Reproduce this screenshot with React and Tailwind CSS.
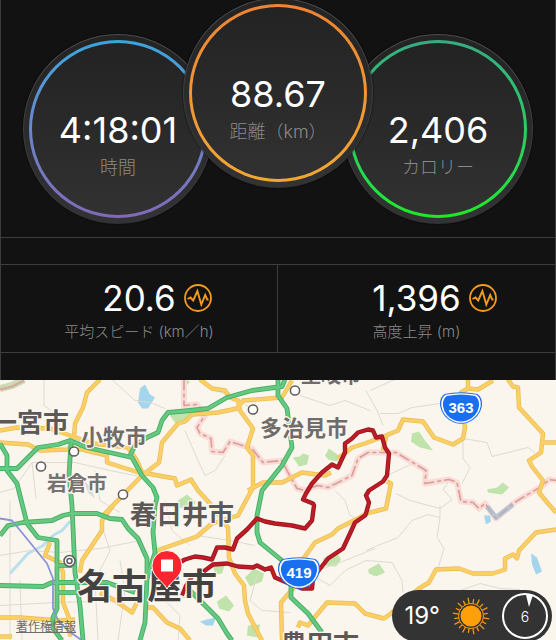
import React from 'react';

const ringTones = {
  time: 'from-[#37a5dc] to-[#8069b8]',
  distance: 'from-[#ee8434] to-[#f3a733]',
  calories: 'from-[#36ad80] to-[#1ceb1f]',
};

function Dial({ value, label, tone, className }) {
  return (
    <div className={`size-[190px] shrink-0 rounded-full bg-linear-to-b from-[#4b4b4d] to-[#303032] p-px shadow-[0_0_2px_#000] ${className}`}>
      <div className="size-full rounded-full bg-linear-to-b from-[#232324] to-[#333335] p-[5px]">
        <div className={`size-full rounded-full bg-linear-to-b p-[3px] ${ringTones[tone]}`}>
          <div className="flex size-full flex-col items-center rounded-full bg-linear-to-b from-[#232323] to-[#313131] pt-[65px]">
            <span className="text-[36px] leading-[44px] text-white">{value}</span>
            <span className="mt-1 text-[18px] leading-6 font-light text-[#8a8a8a]">{label}</span>
          </div>
        </div>
      </div>
    </div>
  );
}

function PulseIcon() {
  return (
    <svg viewBox="0 0 28 28" className="size-7" fill="none" stroke="#f39a1e" aria-hidden="true">
      <circle cx="14" cy="14" r="13" strokeWidth="1.800" />
      <path d="M3.500 15 6.500 13.500 9.200 16.500 13.400 7 17.300 20.500 21.200 11 23.200 15.500 24.500 15.500" strokeWidth="1.900" />
    </svg>
  );
}

function Stat({ value, label }) {
  return (
    <div className="flex flex-col items-center pt-[11px]">
      <div className="grid w-full grid-cols-[1fr_auto_1fr] items-center gap-2">
        <span className="col-start-2 text-[35px] leading-[44px] text-white">{value}</span>
        <PulseIcon />
      </div>
      <span className="text-[15px] leading-6 font-light text-[#8a8a8a]">{label}</span>
    </div>
  );
}

const minorRoads = [
  'M44 379V405L62 418 58 428',
  'M112 379 135 400 150 402 165 408',
  'M0 492 14 488 32 462 75 462 110 470 140 476',
  'M32 462 36 498',
  'M95 470 100 500 120 512',
  'M10 500V640',
  'M0 555 30 550 60 552 100 548 140 540',
  'M0 605 55 602 140 600 200 596',
  'M20 580 22 640',
  'M100 520 110 550 95 580 98 640',
  'M120 560 125 590 118 640',
  'M165 500 172 530 190 545',
  'M185 430 198 460 205 475 215 470 225 455',
  'M212 388 235 398 258 412',
  'M366 390 378 412 383 425',
  'M380 413 398 413 412 407 440 403 452 393',
  'M370 390 388 382 395 379',
  'M463 438 487 442 492 456 528 447 535 452',
  'M463 440 463 458 470 467 462 483',
  'M387 475 415 462',
  'M396 493 410 500 440 508 452 499 443 489 448 482',
  'M366 550 378 545 398 537 412 520 428 514 440 517 440 505',
  'M440 517 437 537 444 548 438 568',
  'M366 560 392 562 402 580 403 592',
  'M335 490 345 500 350 515 360 520',
  'M197 535 230 540 255 545',
  'M257 575 250 600 262 610 290 612',
  'M312 590 318 570 345 560 375 548',
  'M300 395 330 405 345 400 370 410',
  'M318 578 330 585 345 570 366 560',
  'M165 600 180 615 178 640',
  'M460 590 480 583 500 588 520 589',
];

const yellowRoads = [
  'M100 379 87 392 83 407 75 423 74 438',
  'M0 430 17 427 50 428 70 435 93 443 128 447 137 460 142 472 158 475 175 478 177 485 191 479 198 490 210 503 228 527 229 557 235 573 244 585 245 600 248 613 262 640',
  'M0 442 28 444 40 450 68 449 73 443',
  'M78 448 107 455 107 462 142 473',
  'M113 505 102 520 102 530 82 560 80 572',
  'M292 380 282 397 243 400 237 408 218 412 192 414 185 421 178 423 162 442 159 462 142 475 103 515',
  'M200 379 212 388 225 390 230 397 238 400 240 410 253 428 247 447 253 455 253 487 238 515 212 523 197 536 157 550 147 572',
  'M248 490 263 482 282 482 302 472 325 475 331 472',
  'M338 458 352 447 365 443 386 435 398 430 403 419 423 421 434 437 453 444 463 438 465 427 461 392 468 388V379',
  'M468 388 478 389 493 380',
  'M508 379 513 386 518 387 519 407 543 433 541 452 529 460 532 466 543 480 539 492 548 503 556 512',
  'M543 442H556',
  'M386 436 383 450',
  'M387 481 391 483 386 508 366 513 358 518 338 528 332 534 315 542 302 560 293 588 281 602 282 640',
  'M298 627 300 622 308 625 327 602 355 603 365 613 384 618 391 613 419 588 429 582 436 569 459 568 473 573 493 573 505 569V558L513 554 517 558 519 550 536 532 556 529',
  'M50 542 45 555 60 562 63 572V602L70 620V636',
  'M0 617H20L60 620 75 619',
  'M100 592 115 600 132 612 137 602',
  'M147 607H153L167 622 180 628 190 640',
  'M0 636H12',
];

const greenRoads = [
  'M130 455 135 445 147 437 158 432 162 420 168 412 190 410 208 408 227 397 252 390 267 388 282 386 285 379',
  'M278 379V395L287 408 292 447 282 465 262 490 257 515V532L260 542 282 560 291 585V597L308 613 322 632',
  'M0 468H17L38 447 58 444 70 440 87 447 132 457 142 475 153 487 157 497 155 505 153 532 155 552 147 578 145 622 140 640',
  'M0 443 7 455V470L17 483 25 515 27 523 38 537 57 540V608L53 617V628L62 640',
  'M71 442 69 475 72 505 75 572 80 605 83 640',
  'M0 535 8 525 23 522 52 520 63 515 72 513H97L110 518 122 519 128 528 138 538 147 558V578',
  'M0 585 43 586 52 582H107L135 592',
  'M58 592H77',
  'M55 565H72',
  'M185 585 205 605 218 618 227 633 232 640',
];

const prefectureBorder =
  'M184 379V405L197 404 205 415 197 427 200 433 211 438 212 451 223 452 230 441 252 448 263 462 282 460 288 472 297 488 305 490 317 485 328 487 352 475 358 458 368 452H396L426 470 425 483 449 479 457 482 461 501 473 502 479 508 485 503 496 518 513 503 521 498 543 485 549 479 556 480';

const forests = [
  'M168 412 176 424 190 419V412Z',
  'M293 457 300 456 303 453 309 455 307 464 299 466Z',
  'M325 455 329 448 336 453 341 457 337 461 328 459Z',
  'M412 433 419 431 425 440 433 450 420 447 411 441Z',
  'M487 489 497 487 503 482 509 487 502 494 488 492Z',
  'M245 577 254 568 264 573 262 581 250 586Z',
  'M217 601 226 595 234 605 229 611 219 608Z',
  'M248 625 260 624 258 637 247 635Z',
  'M323 558 337 552 341 559 336 566 325 565Z',
  'M368 569 379 563 385 572 376 576 369 573Z',
  'M213 566 225 564 222 573 215 574Z',
  'M178 500 187 494 196 502 190 508 178 507Z',
  'M185 379 190 381 186 386Z',
];

const lakes = [
  'M140 388 145 384 150 394 155 397 148 408 142 408 138 402Z',
  'M200 621 207 619 216 617 213 625 206 625Z',
  'M531 553 537 557 542 571 536 574 532 564Z',
  'M484 515 490 515 491 521 486 524Z',
];

const route =
  'M172 566 185 559 195 556 203 557 212 559 217 547 225 547 233 549 237 538 247 529 257 518 265 521 275 523 292 525 305 528 312 520 314 505 313 503 303 499 306 493 312 483 322 472 332 464 338 467 345 452 345 443 352 438 358 432 368 429 373 430 376 437 382 436 385 447 389 453 387 475 383 481 369 490 366 495 369 502 366 513 365 515 355 522 350 533 343 548 328 558 321 567 313 577 312 588 302 588 289 583 275 577 271 567 265 569 257 565 253 567 238 566 227 563 213 564 205 570';

const places = [
  { name: '一宮市', x: -9, y: 431, className: 'fill-[#5b5856] text-[26px]' },
  { name: '小牧市', x: 81, y: 444, className: 'fill-[#6f6c6a] text-[22px]' },
  { name: '岩倉市', x: 47, y: 490, className: 'fill-[#757270] text-[20px]' },
  { name: '多治見市', x: 260, y: 435, className: 'fill-[#6f6c6a] text-[22px]' },
  { name: '土岐市', x: 301, y: 382, className: 'fill-[#6f6c6a] text-[20px]' },
  { name: '春日井市', x: 130, y: 523, className: 'fill-[#5b5856] text-[26px]' },
  { name: '名古屋市', x: 77, y: 598, className: 'fill-[#444240] text-[35px]' },
  { name: '豊田市', x: 281, y: 653, className: 'fill-[#5b5856] text-[26px]' },
];

const towns = [
  [74, 451],
  [41, 466],
  [123, 494],
  [253, 409],
  [295, 390],
];

function RouteShield({ number, x, y }) {
  const outline = 'M-16.500-14.500Q0-18 16.500-14.500 21.500-11 21-3 19 9 7 14 0 16.500-7 14-19 9-21-3-21.500-11-16.500-14.500Z';
  return (
    <g transform={`translate(${x} ${y})`}>
      <path d={outline} fill="#1d6fe8" />
      <path d={outline} transform="scale(.94)" fill="#fff" />
      <path d={outline} transform="scale(.86)" fill="#1870f0" />
      <text y="4" textAnchor="middle" className="fill-white font-['Liberation_Sans'] text-[15px] font-bold">{number}</text>
    </g>
  );
}

function RouteMap() {
  return (
    <svg viewBox="0 379 556 261" preserveAspectRatio="xMidYMid slice" className="absolute inset-0 size-full" fill="none" strokeLinejoin="round" role="img" aria-label="ルートマップ">
      <g fill="#bfe3ab">{forests.map((d) => <path key={d} d={d} />)}</g>
      <g fill="#a3d5ec">{lakes.map((d) => <path key={d} d={d} />)}</g>
      <path d="M84 480 90 486 95 498 88 492Z" fill="#d5dae2" />
      <path d="M0 388 12 385 24 379" stroke="#cfd9b4" strokeWidth="7" />
      <path d="M0 389 12 386 24 380" stroke="#d3a9a0" strokeWidth="2" />
      <path d="M70 521 62 530 53 535 43 545 28 553 10 573" stroke="#b9e0ee" strokeWidth="3" />
      <g stroke="#dedad4" strokeWidth="1">{minorRoads.map((d) => <path key={d} d={d} />)}</g>
      <path d={prefectureBorder} stroke="#fadcd6" strokeWidth="6" />
      <path d={prefectureBorder} stroke="#d99c98" strokeWidth="1.600" strokeDasharray="11 3 4 3" />
      <path d="M487 506 496 517 513 504" stroke="#9fb9cc" strokeWidth="5" opacity=".7" />
      <g stroke="#ebbb50" strokeWidth="4.400">{yellowRoads.map((d) => <path key={d} d={d} />)}</g>
      <g stroke="#fad066" strokeWidth="3">{yellowRoads.map((d) => <path key={d} d={d} />)}</g>
      <g stroke="#48b067" strokeWidth="4.800">{greenRoads.map((d) => <path key={d} d={d} />)}</g>
      <g stroke="#66c982" strokeWidth="2.800">{greenRoads.map((d) => <path key={d} d={d} />)}</g>
      <path d="M0 518 12 520 30 542 47 563 53 578V608L58 620 68 630 82 640" stroke="#8c93d6" strokeWidth="1.800" />
      <path d="M205 570 193 575 186 585 182 595" stroke="#b01a24" strokeWidth="4" />

      <g className="font-['Noto_Sans_CJK_JP',sans-serif] font-bold" stroke="#fbf7f0" strokeWidth="2.500" paintOrder="stroke">
        {places.map((place) => (
          <text key={place.name} x={place.x} y={place.y} className={place.className}>{place.name}</text>
        ))}
      </g>

      <g fill="#fff" stroke="#5f5c5a" strokeWidth="1.500">
        {towns.map(([x, y]) => <circle key={`${x}-${y}`} cx={x} cy={y} r="4.600" />)}
        <circle cx="69.500" cy="560.500" r="5.500" />
        <circle cx="69.500" cy="560.500" r="2.500" />
      </g>

      <path d={route} stroke="#9c1520" strokeWidth="4.400" strokeLinecap="round" />
      <path d={route} stroke="#bb1c26" strokeWidth="2.800" strokeLinecap="round" />

      <RouteShield number="363" x={461} y={408} />
      <RouteShield number="419" x={299} y={573} />

      <path d="M167 588.500C163 580 152 577 152 565A15 15 0 0 1 182 565C182 577 171 580 167 588.500Z" fill="#fb2530" stroke="#fff" strokeWidth="1" />
      <rect x="161" y="559" width="12" height="12" fill="#fff" />
    </svg>
  );
}

function SunIcon() {
  const rays = Array.from({ length: 20 }, (_, i) => i * 18);
  return (
    <svg viewBox="0 0 38 38" className="size-[38px]" aria-hidden="true">
      <circle cx="19" cy="19" r="10.500" fill="#ff9f0a" />
      <circle cx="19" cy="19" r="12.500" fill="none" stroke="#ff9f0a" strokeWidth="1" />
      {rays.map((angle, i) => (
        <path key={angle} d={i % 2 ? 'M19 6.500V.5' : 'M19 6.500V2'} stroke="#f0981a" strokeWidth="1.300" transform={`rotate(${angle + 9} 19 19)`} />
      ))}
    </svg>
  );
}

function WeatherPill() {
  return (
    <div className="absolute right-1 -bottom-0.5 flex h-[52px] items-center rounded-full bg-[#333333] pr-1 pl-3 text-white">
      <span className="text-[24px] leading-8">19°</span>
      <span className="ml-3">
        <SunIcon />
      </span>
      <span className="relative ml-3 flex size-[46px] items-center justify-center rounded-full border-2 border-white text-[14px] font-light">
        <svg viewBox="0 0 8 12" className="absolute top-0 left-[22px] h-3 w-2" fill="#fff" aria-hidden="true">
          <path d="M0 0H7L3 12Z" />
        </svg>
        6
      </span>
    </div>
  );
}

export default function App() {
  return (
    <div className="flex min-h-screen flex-col overflow-hidden bg-[#121212] font-[Inter,'Noto_Sans_CJK_JP',sans-serif]">
      <section className="flex h-[237px] items-start justify-center overflow-hidden border-x border-[#3c3c3c]">
        <Dial value="4:18:01" label="時間" tone="time" className="mt-[34px]" />
        <Dial value="88.67" label="距離（km）" tone="distance" className="relative -mx-[30px] -mt-0.5" />
        <Dial value="2,406" label="カロリー" tone="calories" className="mt-[34px]" />
      </section>

      <section className="border-x border-t border-[#3c3c3c] pt-[26px] pb-[27px]">
        <div className="grid h-[89px] grid-cols-2 divide-x divide-[#3c3c3c] border-y border-[#3c3c3c]">
          <Stat value="20.6" label="平均スピード (km／h)" />
          <Stat value="1,396" label="高度上昇 (m)" />
        </div>
      </section>

      <section className="relative min-h-[240px] flex-1 overflow-hidden bg-[#faf5ed]">
        <RouteMap />
        <a href="#legal" className="absolute bottom-1.5 left-4 font-['Noto_Sans_CJK_JP',sans-serif] text-[12px] leading-4 text-[#6f6d6b] underline">著作権情報</a>
        <WeatherPill />
      </section>
    </div>
  );
}
